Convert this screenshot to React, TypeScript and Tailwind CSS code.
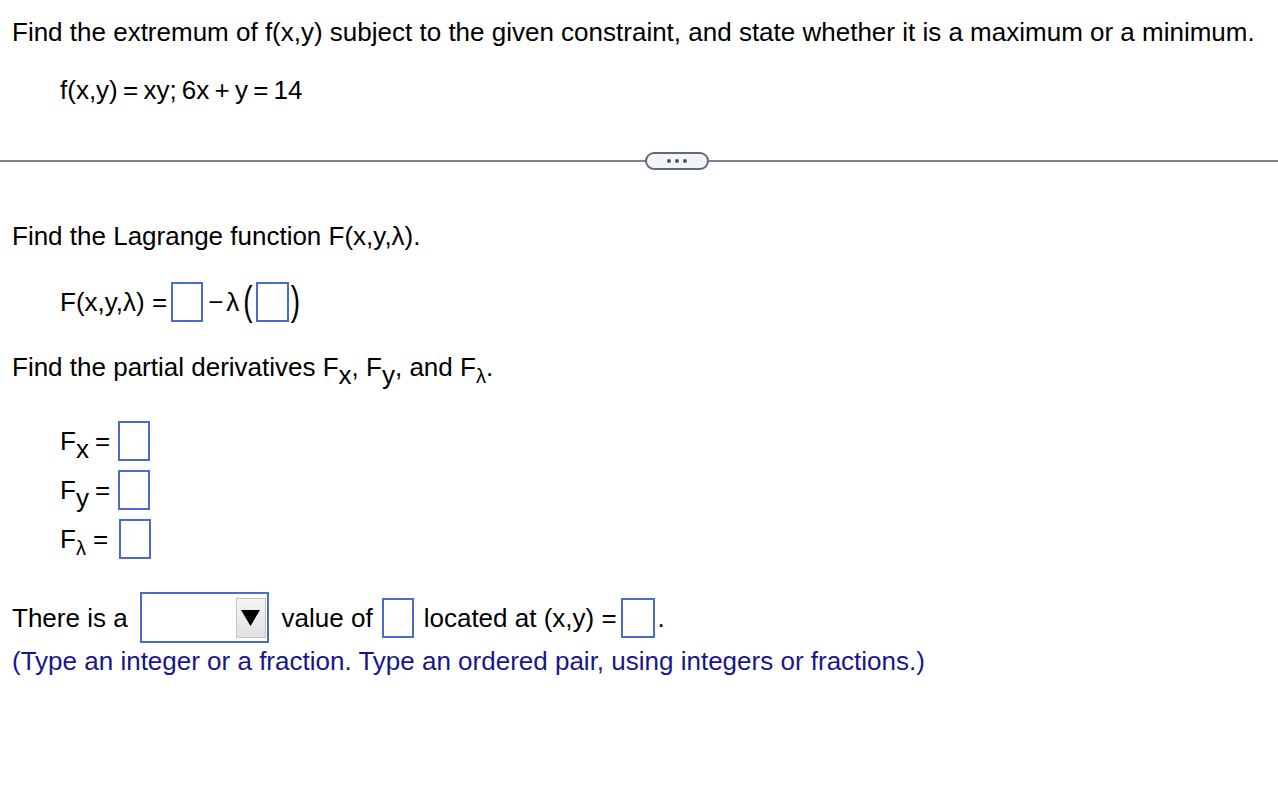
import React from "react";

function Box({ className = "" }: { className?: string }) {
  return (
    <span
      className={`inline-block h-[40px] w-[32px] shrink-0 border-2 border-[#4a6cc8] bg-white ${className}`}
    />
  );
}

function Sub({ children, small = false }: { children: React.ReactNode; small?: boolean }) {
  return (
    <span className={`relative inline-block ${small ? "top-[7px] text-[20px]" : "top-[8px]"}`}>
      {children}
    </span>
  );
}

export default function App() {
  return (
    <div
      className="min-h-screen w-full bg-white text-[26px] leading-none text-black"
      style={{ fontFamily: '"Liberation Sans", Arial, sans-serif' }}
    >
      <div className="px-3 pt-[19px]">
        <p>
          Find the extremum of f(x,y) subject to the given constraint, and state
          whether it is a maximum or a minimum.
        </p>
        <p className="pl-12 pt-[32px] [word-spacing:-2px]">f(x,y) = xy; 6x + y = 14</p>
      </div>

      <div className="relative mt-[57px] flex items-center">
        <div className="h-[2px] w-full bg-[#7b8490]" />
        <div className="absolute left-[645px] top-1/2 flex h-[18px] w-[64px] -translate-y-1/2 items-center justify-center gap-[4px] rounded-full border-2 border-[#5f6b79] bg-[#f3f4f6]">
          <span className="h-[4px] w-[4px] rounded-full bg-[#4b5563]" />
          <span className="h-[4px] w-[4px] rounded-full bg-[#4b5563]" />
          <span className="h-[4px] w-[4px] rounded-full bg-[#4b5563]" />
        </div>
      </div>

      <div className="px-3 pt-[61px]">
        <p>Find the Lagrange function F(x,y,λ).</p>

        <div className="flex items-center pl-12 pt-[33px]">
          <span>F(x,y,λ) =</span>
          <Box className="ml-[4px]" />
          <span className="ml-[5px]">−</span>
          <span className="ml-[3px]">λ</span>
          <span className="ml-[4px] inline-block scale-y-[1.45] text-[28px]">(</span>
          <Box className="ml-[3px] w-[33px]" />
          <span className="ml-[2px] inline-block scale-y-[1.45] text-[28px]">)</span>
        </div>

        <p className="pt-[32px]">
          Find the partial derivatives F<Sub>x</Sub>, F<Sub>y</Sub>, and F
          <Sub small>λ</Sub>.
        </p>

        <div className="flex flex-col gap-[9px] pl-12 pt-[41px]">
          <div className="flex h-[40px] items-center">
            <span className="w-[58px]">
              F<Sub>x</Sub>
              <span className="ml-[6px]">=</span>
            </span>
            <Box className="w-[31px]" />
          </div>
          <div className="flex h-[40px] items-center">
            <span className="w-[58px]">
              F<Sub>y</Sub>
              <span className="ml-[6px]">=</span>
            </span>
            <Box className="w-[31px]" />
          </div>
          <div className="flex h-[40px] items-center">
            <span className="w-[59px]">
              F<Sub small>λ</Sub>
              <span className="ml-[7px]">=</span>
            </span>
            <Box className="w-[31px]" />
          </div>
        </div>

        <div className="flex items-center pt-[33px]">
          <span>There is a</span>
          <span className="ml-[12px] flex h-[51px] w-[129px] items-center justify-end border-2 border-[#4a6cc8] bg-white pr-[1px]">
            <span className="flex h-[40px] w-[30px] items-center justify-center border border-[#c4c4c4] bg-gradient-to-b from-[#f6f6f6] to-[#e0e0e0]">
              <svg width="19" height="16" viewBox="0 0 19 16">
                <polygon points="0,0 19,0 9.5,16" fill="#000" />
              </svg>
            </span>
          </span>
          <span className="ml-[13px]">value of</span>
          <Box className="ml-[9px]" />
          <span className="ml-[10px]">located at (x,y) =</span>
          <Box className="ml-[4px] w-[34px]" />
          <span className="ml-[3px]">.</span>
        </div>
        <p className="pt-[5px] text-[#17178a]">
          (Type an integer or a fraction. Type an ordered pair, using integers or
          fractions.)
        </p>
      </div>
    </div>
  );
}
